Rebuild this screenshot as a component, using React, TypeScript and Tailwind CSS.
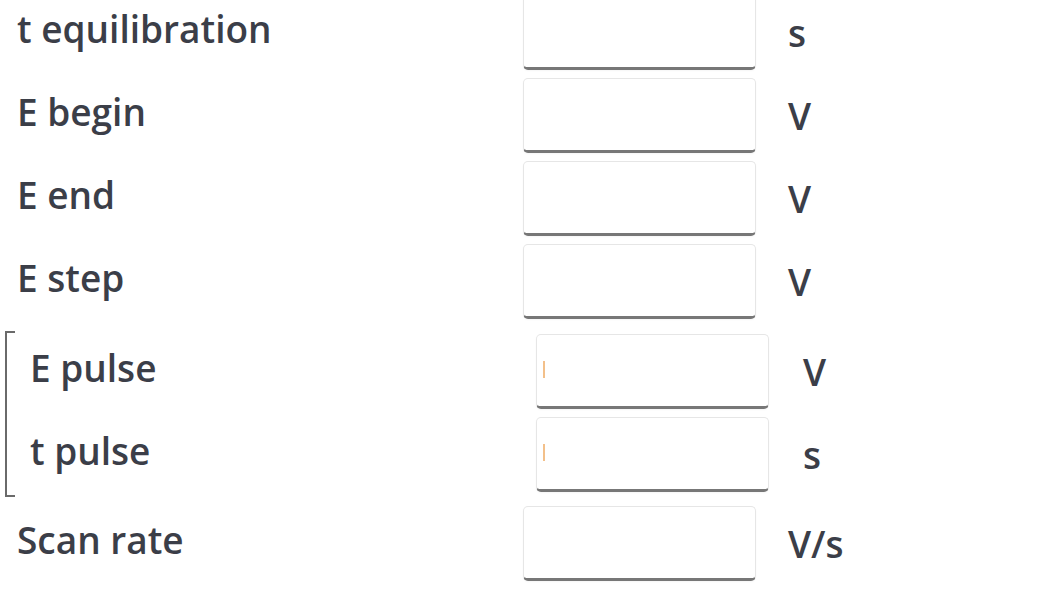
import React from 'react';

interface FieldProps {
  label: string;
  unit: string;
  grouped?: boolean;
  caret?: boolean;
}

// champ de saisie façon WinUI : label, boîte, unité
const Field: React.FC<FieldProps> = ({ label, unit, grouped, caret }) => (
  <div className="flex items-center h-[75px]">
    <div className={`${grouped ? 'w-[521px] pl-[15px]' : 'w-[523px] pl-[17px]'} pb-[8px] text-[37px] font-semibold leading-none text-[#3b3e48]`}>
      {label}
    </div>
    <div className="relative w-[233px] h-[75px] bg-white border border-[#e6e6e6] border-b-[3px] border-b-[#777777] rounded-[5px] shadow-[0_1px_2px_rgba(0,0,0,0.04)]">
      {caret && <span className="absolute left-[6px] top-[26px] w-[2px] h-[17px] bg-[#f3c08a]" />}
    </div>
    <div className={`${grouped ? 'ml-[34px]' : 'ml-[32px]'} text-[37px] font-semibold leading-none text-[#3b3e48]`}>
      {unit}
    </div>
  </div>
);

export default function App() {
  return (
    <div className="w-[1062px] h-[593px] overflow-hidden bg-white" style={{ fontFamily: '"Open Sans", "Noto Sans", sans-serif' }}>
      <div className="flex flex-col mt-[-5px]">
        <div className="flex flex-col gap-2">
          <Field label="t equilibration" unit="s" />
          <Field label="E begin" unit="V" />
          <Field label="E end" unit="V" />
          <Field label="E step" unit="V" />
        </div>

        {/* groupe pulse avec crochet */}
        <div className="flex mt-[12px] ml-[5px]">
          <div className="w-[10px] border-2 border-r-0 border-[#6a6a6a]" />
          <div className="flex flex-col gap-2 pt-[3px] pb-[5px]">
            <Field label="E pulse" unit="V" grouped caret />
            <Field label="t pulse" unit="s" grouped caret />
          </div>
        </div>

        <div className="mt-[9px]">
          <Field label="Scan rate" unit="V/s" />
        </div>
      </div>
    </div>
  );
}
